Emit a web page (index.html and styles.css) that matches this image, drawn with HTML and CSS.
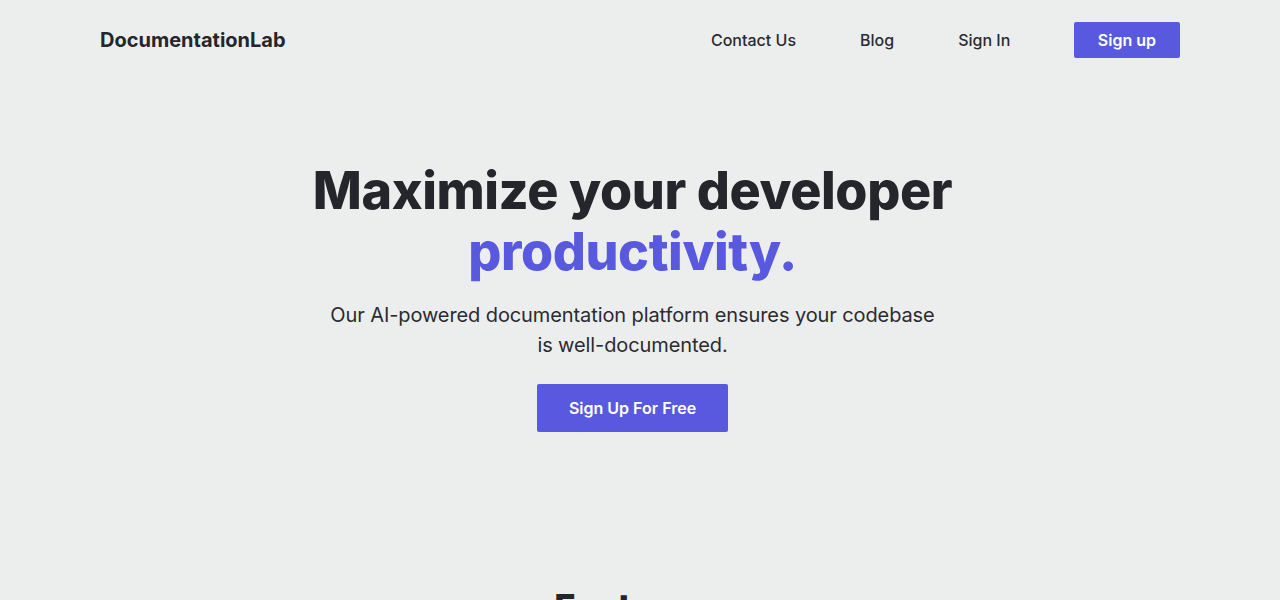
FILE: index.html
```html
<!DOCTYPE html>
<html lang="en">
<head>
<meta charset="utf-8">
<title>DocumentationLab</title>
<link rel="stylesheet" href="styles.css">
</head>
<body>
<header class="nav">
  <div class="logo">DocumentationLab</div>
  <nav class="links">
    <a class="link" href="#">Contact Us</a>
    <a class="link" href="#">Blog</a>
    <a class="link" href="#">Sign In</a>
    <a class="btn btn-sm" href="#">Sign up</a>
  </nav>
</header>
<main class="main">
  <section class="hero">
    <h1 class="title">Maximize your developer<br><span class="accent">productivity.</span></h1>
    <p class="lead">Our AI-powered documentation platform ensures your codebase<br>is well-documented.</p>
    <a class="btn btn-lg" href="#">Sign Up For Free</a>
  </section>
  <section class="features">
    <h2 class="features-title">Features</h2>
  </section>
</main>
</body>
</html>
```
FILE: styles.css
```css
* { box-sizing: border-box; }
html, body { margin: 0; padding: 0; }
body {
  background: #eceeed;
  font-family: Inter, "Noto Sans", sans-serif;
  color: #25262b;
}
a { text-decoration: none; color: inherit; }
.nav {
  max-width: 1080px;
  margin: 0 auto;
  padding: 22px 0 0;
  display: flex;
  align-items: center;
  justify-content: space-between;
}
.logo {
  font-size: 20px;
  font-weight: 700;
  color: #25262b;
}
.links {
  display: flex;
  align-items: center;
  gap: 64px;
}
.link {
  font-size: 16px;
  font-weight: 500;
  color: #2a2b30;
  line-height: 20px;
}
.btn {
  background: #5959e0;
  color: #ffffff;
  font-weight: 600;
  border-radius: 2px;
  display: inline-block;
}
.btn-sm {
  font-size: 16px;
  line-height: 20px;
  padding: 8px 24px 8px 23.5px;
}
.main {
  padding-right: 15px;
}
.hero {
  display: flex;
  flex-direction: column;
  align-items: center;
  text-align: center;
  padding-top: 102px;
}
.title {
  margin: 0;
  font-size: 52px;
  line-height: 61px;
  font-weight: 800;
  letter-spacing: -0.4px;
  color: #25262b;
}
.accent { color: #5959e0; }
.lead {
  margin: 18px 0 0;
  font-size: 20px;
  line-height: 30px;
  font-weight: 400;
  letter-spacing: -0.1px;
  color: #2a2b30;
}
.btn-lg {
  margin-top: 24px;
  font-size: 16px;
  line-height: 24px;
  padding: 12px 31.5px;
}
.features {
  display: flex;
  justify-content: center;
  padding-top: 155px;
}
.features-title {
  margin: 0;
  font-size: 36px;
  line-height: 40px;
  font-weight: 800;
  color: #25262b;
}
```
